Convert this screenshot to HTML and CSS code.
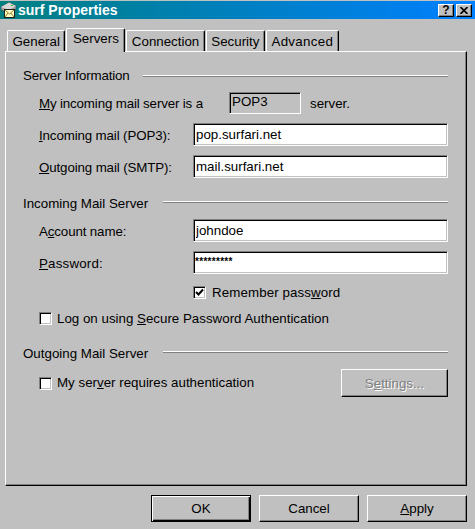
FILE: index.html
```html
<!DOCTYPE html>
<html lang="en">
<head>
  <meta charset="UTF-8" />
  <title>surf Properties</title>
  <link rel="stylesheet" href="styles.css">
</head>
<body>
  <div class="window">
    <div class="titlebar">
      <svg class="title-icon" viewBox="0 0 17 18" width="17" height="18">
        <polygon points="0,6 8,1.5 15,5 15,8 8,12 0,9" fill="#a0a0a0" stroke="#404040" stroke-width="0.6"/>
        <polygon points="0,6 8,1.5 15,5 8,9" fill="#d8d8d8"/>
        <rect x="10" y="4" width="2" height="1" fill="#20c020"/>
        <rect x="3.5" y="8.5" width="10" height="8" fill="#ffffc8" stroke="#202020"/>
        <path d="M4 9l4.5 4 4.5-4M4 16l3-4M13 16l-3-4" fill="none" stroke="#806000" stroke-width="0.8"/>
      </svg>
      <span class="title-text">surf Properties</span>
      <div class="title-buttons">
        <div class="title-btn">?</div>
        <div class="title-btn title-close">
          <svg viewBox="0 0 8 7" width="8" height="7">
            <path d="M0.5 0l7 7M7.5 0l-7 7" stroke="#000" stroke-width="1.6" fill="none"/>
          </svg>
        </div>
      </div>
    </div>

    <div class="tabs">
      <div class="tab">General</div>
      <div class="tab tab-active">Servers</div>
      <div class="tab">Connection</div>
      <div class="tab">Security</div>
      <div class="tab">Advanced</div>
    </div>

    <div class="panel">
      <div class="group-head first">
        <span class="group-title">Server Information</span>
        <div class="group-line"></div>
      </div>
      <div class="row row-type">
        <label class="label-inline"><u>M</u>y incoming mail server is a</label>
        <div class="static-box">POP3</div>
        <span class="after-box">server.</span>
      </div>
      <div class="row row-field">
        <label class="label"><u>I</u>ncoming mail (POP3):</label>
        <input class="field" type="text" value="pop.surfari.net">
      </div>
      <div class="row row-field">
        <label class="label"><u>O</u>utgoing mail (SMTP):</label>
        <input class="field" type="text" value="mail.surfari.net">
      </div>

      <div class="group-head second">
        <span class="group-title">Incoming Mail Server</span>
        <div class="group-line"></div>
      </div>
      <div class="row row-account">
        <label class="label">A<u>c</u>count name:</label>
        <input class="field" type="text" value="johndoe">
      </div>
      <div class="row row-field">
        <label class="label label-pass"><u>P</u>assword:</label>
        <input class="field field-pass" type="text" value="*********">
      </div>
      <div class="row row-remember">
        <div class="check check-on">
          <svg viewBox="0 0 9 9" width="9" height="9">
            <path d="M1 4l2.5 2.5L8 1.5" fill="none" stroke="#000" stroke-width="2"/>
          </svg>
        </div>
        <span>Remember pass<u>w</u>ord</span>
      </div>
      <div class="row row-logon">
        <div class="check"></div>
        <span>Log on using <u>S</u>ecure Password Authentication</span>
      </div>

      <div class="group-head third">
        <span class="group-title">Outgoing Mail Server</span>
        <div class="group-line"></div>
      </div>
      <div class="row row-auth">
        <div class="check"></div>
        <span class="auth-text">My ser<u>v</u>er requires authentication</span>
        <button class="btn btn-settings" disabled>S<u>e</u>ttings...</button>
      </div>
    </div>

    <div class="footer">
      <button class="btn btn-default">OK</button>
      <button class="btn">Cancel</button>
      <button class="btn"><u>A</u>pply</button>
    </div>
  </div>
</body>
</html>
```

FILE: styles.css
```css
html, body {
  margin: 0;
  padding: 0;
  background: #c0c0c0;
  overflow: hidden;
}
.window {
  width: 475px;
  height: 529px;
  padding-top: 1px;
  box-sizing: border-box;
  font-family: "Liberation Sans", Arial, sans-serif;
  font-size: 13.33px;
  color: #000;
}
.titlebar {
  height: 18px;
  display: flex;
  align-items: center;
  background: linear-gradient(to right, #008080, #0080ff);
}
.title-icon {
  flex: none;
  margin-left: 1px;
}
.title-text {
  color: #fff;
  font-weight: bold;
  font-size: 14px;
}
.title-buttons {
  margin-left: auto;
  margin-right: 3px;
  display: flex;
  gap: 2px;
}
.title-btn {
  width: 16px;
  height: 13px;
  box-sizing: border-box;
  background: #c0c0c0;
  border: 1px solid;
  border-color: #fff #000 #000 #fff;
  box-shadow: inset -1px -1px 0 #808080;
  display: flex;
  align-items: center;
  justify-content: center;
  font-weight: bold;
  font-size: 12px;
  line-height: 11px;
}
.tabs {
  margin-top: 9px;
  height: 23px;
  padding-left: 7px;
  display: flex;
  align-items: flex-end;
  gap: 1px;
}
.tab {
  height: 21px;
  box-sizing: border-box;
  padding: 3px 4.5px 0 4.5px;
  border: 1px solid;
  border-color: #fff #000 transparent #fff;
  border-bottom: 0;
  border-radius: 2px 2px 0 0;
  box-shadow: inset -1px 0 0 #808080;
  line-height: 16px;
}
.tab:last-child {
  padding-right: 5px;
  letter-spacing: 0.3px;
}
.tab-active {
  height: 24px;
  margin-bottom: -1px;
  padding: 2px 5.5px 0 5.5px;
  position: relative;
  background: #c0c0c0;
  z-index: 2;
}
.panel {
  width: 462px;
  height: 435px;
  margin-left: 5px;
  padding: 0 17px;
  box-sizing: border-box;
  border: 1px solid;
  border-color: #fff #000 #000 #fff;
  box-shadow: inset -1px -1px 0 #808080;
  overflow: hidden;
}
.group-head {
  display: flex;
  align-items: center;
  height: 16px;
}
.group-head.first {
  margin-top: 15px;
}
.group-head.second {
  margin-top: 17px;
}
.group-head.third {
  margin-top: 20px;
}
.group-title {
  padding-top: 2px;
  line-height: 16px;
}
.first .group-title {
  letter-spacing: -0.17px;
}
.group-line {
  flex: 1;
  height: 1px;
  margin-left: 15px;
  margin-right: 1px;
  margin-bottom: 2px;
  background: #fff;
  border-bottom: 1px solid #808080;
}
.first .group-line {
  margin-left: 13px;
  margin-top: 2px;
  margin-bottom: 0;
}
.row {
  display: flex;
  align-items: center;
  padding-left: 16px;
  margin-top: 9px;
  line-height: 18px;
}
.row-account {
  margin-top: 8px;
}
.label {
  width: 154px;
  flex: none;
  padding-top: 2px;
  letter-spacing: -0.13px;
}
.label-pass {
  letter-spacing: 0.2px;
}
.label-inline {
  width: 190px;
  flex: none;
  padding-top: 2px;
  letter-spacing: -0.15px;
}
.row-type {
  height: 22px;
}
.static-box {
  width: 72px;
  height: 22px;
  box-sizing: border-box;
  padding-left: 2px;
  line-height: 18px;
  border: 1px solid;
  border-color: #808080 #fff #fff #808080;
  box-shadow: inset 1px 1px 0 #000;
}
.after-box {
  margin-left: 9px;
  padding-top: 2px;
}
.field {
  width: 255px;
  height: 23px;
  margin: 0;
  box-sizing: border-box;
  padding: 0 0 1px 2px;
  border: 1px solid;
  border-color: #808080 #fff #fff #808080;
  box-shadow: inset 1px 1px 0 #000, inset -1px -1px 0 #c0c0c0;
  border-radius: 0;
  outline: none;
  background: #fff;
  color: #000;
  font: 13.33px "Liberation Sans", Arial, sans-serif;
}
.field-pass {
  font-size: 10px;
  font-weight: bold;
  padding: 0 0 3px 1px;
  letter-spacing: 0.3px;
}
.check {
  width: 13px;
  height: 13px;
  flex: none;
  box-sizing: border-box;
  background: #fff;
  border: 1px solid;
  border-color: #808080 #fff #fff #808080;
  box-shadow: inset 1px 1px 0 #000, inset -1px -1px 0 #c0c0c0;
  display: flex;
  align-items: center;
  justify-content: center;
}
.row-remember {
  height: 13px;
  margin-top: 12px;
  padding-left: 170px;
  gap: 6px;
}
.row-remember span {
  letter-spacing: 0.1px;
}
.row-logon {
  height: 13px;
  margin-top: 13px;
  gap: 5px;
}
.row-auth {
  margin-top: 8px;
  gap: 5px;
}
.auth-text {
  flex: 1;
}
.btn {
  width: 100px;
  height: 27px;
  margin: 0;
  padding: 0;
  box-sizing: border-box;
  background: #c0c0c0;
  border: 1px solid;
  border-color: #fff #000 #000 #fff;
  border-radius: 0;
  box-shadow: inset -1px -1px 0 #808080;
  color: #000;
  font: 13.33px "Liberation Sans", Arial, sans-serif;
}
.btn-settings {
  width: 107px;
  height: 28px;
  margin-right: 1px;
  color: #808080;
  text-shadow: 1px 1px 0 #fff;
}
.btn-default {
  border-color: #000;
  box-shadow: inset 1px 1px 0 #fff, inset -1px -1px 0 #000, inset -2px -2px 0 #808080;
}
.footer {
  margin-top: 9px;
  padding-right: 8px;
  display: flex;
  justify-content: flex-end;
  gap: 8px;
}
```
